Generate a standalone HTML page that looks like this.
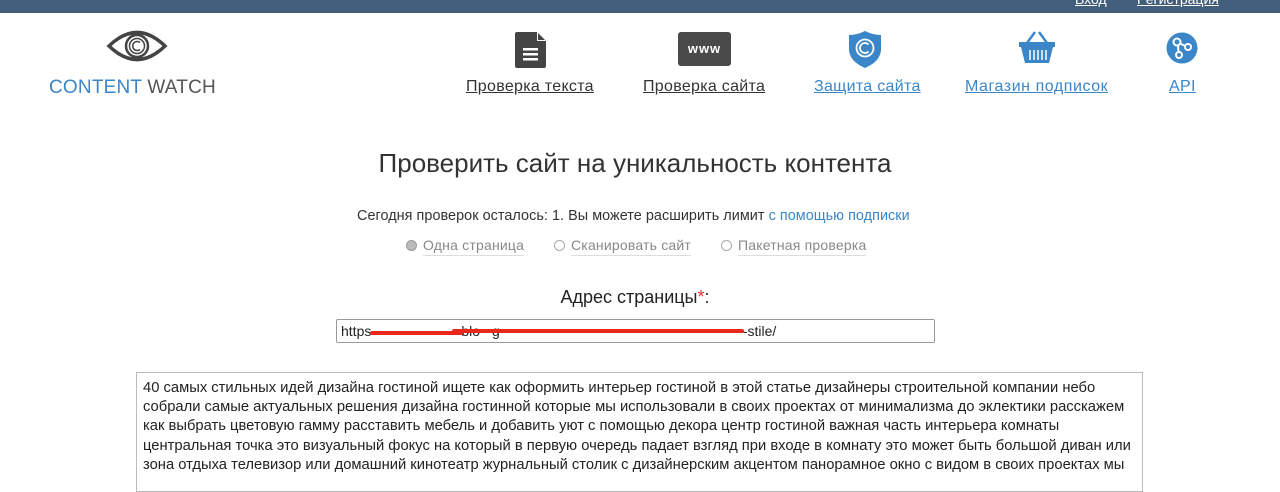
<!DOCTYPE html>
<html><head><meta charset="utf-8"><style>
*{margin:0;padding:0;box-sizing:border-box}
body{width:1280px;height:473px;overflow:hidden;background:#fff;font-family:"Liberation Sans","DejaVu Sans",sans-serif;color:#333;position:relative}
.top{position:absolute;left:0;top:0;width:1280px;height:13px;background:#435e7a}
.top a{position:absolute;top:-9px;color:#fff;font-size:14px;text-decoration:underline}
.abs{position:absolute}
.nav{position:absolute;top:78px;font-size:16px;text-decoration:underline;white-space:nowrap;letter-spacing:0.3px}
.dark{color:#333}.blue{color:#3a86c8}
.radio{position:absolute;top:237px;font-size:14px;color:#888;border-bottom:1px solid #ddd;padding-bottom:2px;white-space:nowrap;letter-spacing:0.2px}
.radio i{position:absolute;left:-17px;top:3px;width:11px;height:11px;border:1px solid #aaa;border-radius:50%;background:#fff}
.box{position:absolute;left:136px;top:372px;width:1007px;height:120px;border:1px solid #bbb;padding:6px 0 0 6px;font-size:14.75px;line-height:19.2px;color:#222;white-space:nowrap;overflow:hidden}
</style></head><body>
<div class="top"><a style="left:1075px">Вход</a><a style="left:1137px">Регистрация</a></div>

<svg class="abs" style="left:106px;top:27px" width="62" height="38" viewBox="0 0 62 38">
<path d="M3 19 Q31 -8 59 19 Q31 46 3 19Z" fill="none" stroke="#444" stroke-width="3.5"/>
<circle cx="31" cy="19" r="11" fill="none" stroke="#444" stroke-width="2.5"/>
<circle cx="31" cy="19" r="7.5" fill="none" stroke="#444" stroke-width="1.5"/>
<path d="M34 15.5 A4.5 4.5 0 1 0 34 22.5" fill="none" stroke="#444" stroke-width="1.6"/>
</svg>
<div class="abs" style="left:49px;top:77px;font-size:19px;letter-spacing:0.2px;white-space:nowrap"><span style="color:#3a86c8">CONTENT</span> <span style="color:#555">WATCH</span></div>

<svg class="abs" style="left:515px;top:32px" width="31" height="36" viewBox="0 0 31 36">
<path d="M2 0 H22 L31 9 V34 Q31 36 29 36 H2 Q0 36 0 34 V2 Q0 0 2 0Z" fill="#444"/>
<path d="M22 0 V9 H31" fill="#fff"/><path d="M23 1 L30 8 H23Z" fill="#444"/>
<rect x="8" y="16" width="15" height="2.5" fill="#fff"/><rect x="8" y="21" width="15" height="2.5" fill="#fff"/><rect x="8" y="26" width="15" height="2.5" fill="#fff"/>
</svg>
<div class="nav dark" style="left:466px">Проверка текста</div>

<div class="abs" style="left:678px;top:32px;width:53px;height:34px;background:#4a4a4a;border-radius:3px;color:#fff;font-weight:bold;font-size:13px;text-align:center;line-height:34px;letter-spacing:1px">www</div>
<div class="nav dark" style="left:643px">Проверка сайта</div>

<svg class="abs" style="left:849px;top:31px" width="32" height="37" viewBox="0 0 32 37">
<path d="M16 0 Q24 4 32 4 V18 Q32 30 16 37 Q0 30 0 18 V4 Q8 4 16 0Z" fill="#3a86c8"/>
<circle cx="16" cy="17" r="8.5" fill="none" stroke="#fff" stroke-width="1.8"/>
<path d="M19.5 13.5 A5 5 0 1 0 19.5 20.5" fill="none" stroke="#fff" stroke-width="1.8"/>
</svg>
<div class="nav blue" style="left:814px">Защита сайта</div>

<svg class="abs" style="left:1019px;top:31px" width="36" height="32" viewBox="0 0 36 32">
<path d="M8 12 L16 1 M28 12 L20 1" stroke="#3a86c8" stroke-width="2.5" fill="none"/>
<rect x="0" y="11" width="36" height="5" fill="#3a86c8"/>
<path d="M2 16 H34 L30 32 H6Z" fill="#3a86c8"/>
<g stroke="#fff" stroke-width="1.5"><path d="M11 19V29M15 19V29M19 19V29M23 19V29M27 19V29"/></g>
</svg>
<div class="nav blue" style="left:965px;letter-spacing:0.55px">Магазин подписок</div>

<svg class="abs" style="left:1166px;top:32px" width="32" height="32" viewBox="0 0 32 32">
<circle cx="16" cy="16" r="15.5" fill="#3a86c8"/>
<g fill="none" stroke="#fff" stroke-width="2"><circle cx="11" cy="10" r="3.5"/><circle cx="22" cy="15" r="3"/><circle cx="13" cy="23" r="3"/><path d="M14 11.5 L19.5 14 M12 13.5 L12.5 20"/></g>
</svg>
<div class="nav blue" style="left:1169px">API</div>

<div class="abs" style="left:0;width:1270px;top:148px;text-align:center;font-size:26px;color:#333">Проверить сайт на уникальность контента</div>
<div class="abs" style="left:357px;top:208px;font-size:14.4px;color:#333;white-space:nowrap;letter-spacing:0.05px">Сегодня проверок осталось: 1. Вы можете расширить лимит <span style="color:#3a86c8">с помощью подписки</span></div>

<div class="radio" style="left:423px"><i style="background:#bbb;border-color:#999"></i>Одна страница</div>
<div class="radio" style="left:571px"><i></i>Сканировать сайт</div>
<div class="radio" style="left:738px"><i></i>Пакетная проверка</div>

<div class="abs" style="left:0;width:1270px;top:287px;text-align:center;font-size:18px;color:#222">Адрес страницы<span style="color:#e03030">*</span>:</div>
<div class="abs" style="left:336px;top:319px;width:599px;height:24px;border:1px solid #999;border-radius:2px;font-size:14px;line-height:22px;padding-left:4px;color:#222;white-space:nowrap">https<span style="display:inline-block;width:90px"></span>blo<span style="display:inline-block;width:12px"></span>g<span style="display:inline-block;width:243px"></span>-stile/</div>
<div class="abs" style="left:370px;top:331px;width:93px;height:4px;background:#e8281c;border-radius:2px"></div>
<div class="abs" style="left:452px;top:329px;width:292px;height:4px;background:#e8281c;border-radius:2px"></div>

<div class="box">40 самых стильных идей дизайна гостиной ищете как оформить интерьер гостиной в этой статье дизайнеры строительной компании небо<br>собрали самые актуальных решения дизайна гостинной которые мы использовали в своих проектах от минимализма до эклектики расскажем<br>как выбрать цветовую гамму расставить мебель и добавить уют с помощью декора центр гостиной важная часть интерьера комнаты<br>центральная точка это визуальный фокус на который в первую очередь падает взгляд при входе в комнату это может быть большой диван или<br>зона отдыха телевизор или домашний кинотеатр журнальный столик с дизайнерским акцентом панорамное окно с видом в своих проектах мы</div>
</body></html>
